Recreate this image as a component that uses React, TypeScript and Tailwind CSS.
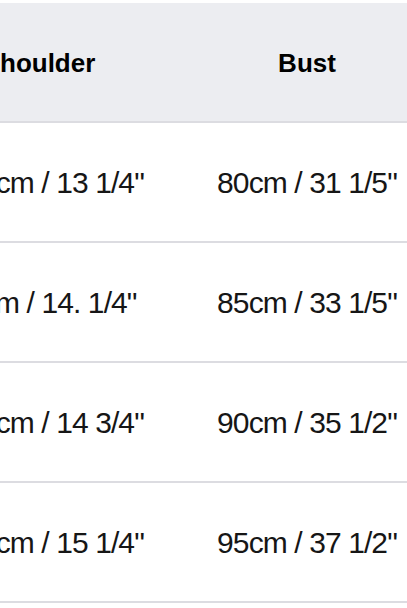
import React from 'react';

type Row = { shoulder: string; bust: string; nudge?: boolean };

const rows: Row[] = [
  { shoulder: '34cm / 13 1/4"', bust: '80cm / 31 1/5"' },
  { shoulder: '36cm / 14. 1/4"', bust: '85cm / 33 1/5"', nudge: true },
  { shoulder: '37cm / 14 3/4"', bust: '90cm / 35 1/2"' },
  { shoulder: '39cm / 15 1/4"', bust: '95cm / 37 1/2"' },
];

export default function App() {
  return (
    <div
      className="w-[407px] h-[608px] overflow-hidden bg-white text-black"
      style={{ fontFamily: '"Liberation Sans", Arial, sans-serif' }}
    >
      <div className="-ml-[99px] w-[506px] pt-[3px]">
        {/* header */}
        <div className="flex h-[120px] items-center border-b-2 border-[#dcdce1] bg-[#ecedf1] pt-[2px] text-[26px] font-bold">
          <div className="w-[306px] pr-[30px] text-center whitespace-nowrap">Shoulder</div>
          <div className="w-[200px] text-center">Bust</div>
        </div>

        {rows.map((row, i) => (
          <div
            key={i}
            className="flex h-[120px] items-center border-b-2 border-[#dcdce1] text-[30px] tracking-[-0.9px] text-[#161616]"
          >
            <div className={`w-[306px] text-center whitespace-nowrap ${row.nudge ? 'pr-[22px]' : ''}`}>
              {row.shoulder}
            </div>
            <div className="w-[200px] text-center whitespace-nowrap">{row.bust}</div>
          </div>
        ))}
      </div>
    </div>
  );
}
